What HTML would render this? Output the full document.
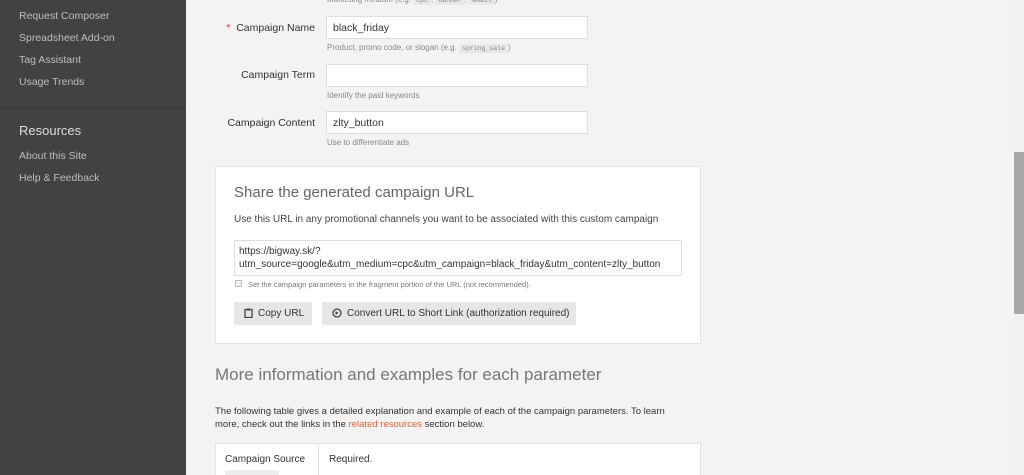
<!DOCTYPE html>
<html><head><meta charset="utf-8"><style>
*{box-sizing:border-box;margin:0;padding:0}
html,body{width:1024px;height:475px;overflow:hidden}
body{background:#f4f3f2;font-family:"Liberation Sans",sans-serif;position:relative;color:#333}
.side{position:absolute;left:0;top:0;width:186px;height:475px;background:#424242}
.side a{position:absolute;left:19px;color:#bdbdbd;font-size:10.5px}
.sep{position:absolute;left:0;top:107px;width:186px;height:1px;background:#3a3a3a}
.abs{position:absolute}
.lbl{position:absolute;font-size:10.5px;color:#333;text-align:right;width:110px;left:205px}
.inp{position:absolute;left:326px;width:262px;height:23px;background:#fff;border:1px solid #ddd;font-size:10.5px;padding:5px 6px}
.help{position:absolute;left:327px;font-size:8px;color:#888}
code{font-family:"Liberation Mono",monospace;font-size:6.5px;background:#e8e8e8;padding:1px 3px}
.card{position:absolute;left:215px;top:166px;width:486px;height:178px;background:#fff;border:1px solid #e4e4e4}
.btn{position:absolute;height:23px;background:#e6e6e6;font-size:10px;color:#333;padding:6px 10px;white-space:nowrap}
.btn svg{vertical-align:-2px;margin-right:5px}
.sb{position:absolute;left:1014px;top:0;width:10px;height:475px;background:#f1f1f1}
</style></head><body>
<div class="side">
<a style="top:10px">Request Composer</a>
<a style="top:32px">Spreadsheet Add-on</a>
<a style="top:54px">Tag Assistant</a>
<a style="top:76px">Usage Trends</a>
<div class="sep"></div>
<a style="top:123px;font-size:13px;color:#ddd">Resources</a>
<a style="top:150px">About this Site</a>
<a style="top:172px">Help &amp; Feedback</a>
</div>
<div class="help" style="top:-5px">Marketing medium (e.g. <code>cpc</code>, <code>banner</code>, <code>email</code>)</div>
<div class="lbl" style="top:22px"><span style="color:#e53935">*</span>&nbsp; Campaign Name</div>
<div class="inp" style="top:16px">black_friday</div>
<div class="help" style="top:43px">Product, promo code, or slogan (e.g. <code>spring_sale</code>)</div>
<div class="lbl" style="top:69px">Campaign Term</div>
<div class="inp" style="top:64px"></div>
<div class="help" style="top:91px">Identify the paid keywords</div>
<div class="lbl" style="top:117px">Campaign Content</div>
<div class="inp" style="top:111px">zlty_button</div>
<div class="help" style="top:138px">Use to differentiate ads</div>
<div class="card">
<div class="abs" style="left:18px;top:17px;font-size:15px;color:#666">Share the generated campaign URL</div>
<div class="abs" style="left:18px;top:47px;font-size:10px;color:#444">Use this URL in any promotional channels you want to be associated with this custom campaign</div>
<div class="abs" style="left:18px;top:73px;width:448px;height:36px;border:1px solid #ddd;font-size:10px;padding:4px 4px;line-height:13px;color:#333">https://bigway.sk/?<br>utm_source=google&amp;utm_medium=cpc&amp;utm_campaign=black_friday&amp;utm_content=zlty_button</div>
<div class="abs" style="left:19px;top:113px;width:7px;height:7px;border:1px solid #bbb;background:#f4f4f4"></div>
<div class="abs" style="left:32px;top:113px;font-size:7.5px;color:#777">Set the campaign parameters in the fragment portion of the URL (not recommended).</div>
<div class="btn" style="left:18px;top:135px;width:78px"><svg width="9" height="10" viewBox="0 0 9 10"><rect x="1" y="1.5" width="7" height="8" fill="none" stroke="#444" stroke-width="1.3"/><rect x="3" y="0.5" width="3" height="2" fill="#444"/></svg>Copy URL</div>
<div class="btn" style="left:106px;top:135px;width:254px"><svg width="10" height="10" viewBox="0 0 10 10"><circle cx="5" cy="5" r="4" fill="none" stroke="#444" stroke-width="1.3"/><path d="M3.5 3v4l3-2z" fill="#444"/></svg>Convert URL to Short Link (authorization required)</div>
</div>
<div class="abs" style="left:215px;top:365px;font-size:17px;color:#777">More information and examples for each parameter</div>
<div class="abs" style="left:215px;top:405px;font-size:9.5px;color:#333;line-height:13px;width:470px">The following table gives a detailed explanation and example of each of the campaign parameters. To learn more, check out the links in the <span style="color:#e0643c">related resources</span> section below.</div>
<div class="abs" style="left:215px;top:443px;width:486px;height:40px;background:#fff;border:1px solid #e4e4e4"></div>
<div class="abs" style="left:318px;top:443px;width:1px;height:40px;background:#e4e4e4"></div>
<div class="abs" style="left:225px;top:454px;font-size:10px">Campaign Source</div>
<div class="abs" style="left:329px;top:454px;font-size:10px">Required.</div>
<div class="abs" style="left:225px;top:470px;width:54px;height:8px;background:#eee"></div>
<div class="sb"><div class="abs" style="left:0;top:152px;width:10px;height:162px;background:#a8a8a8"></div></div>
</body></html>
